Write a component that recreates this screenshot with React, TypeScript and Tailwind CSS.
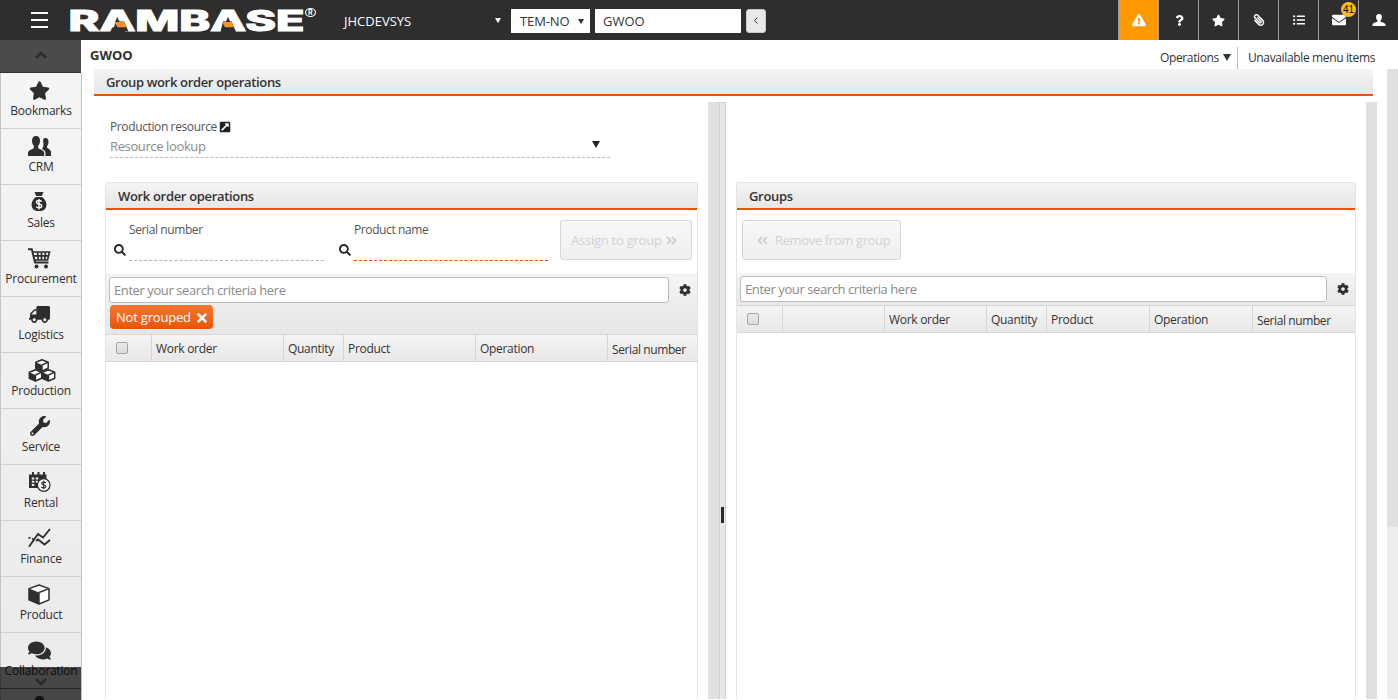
import type { ReactNode } from 'react'
import {
  FaStar, FaTruck, FaWrench, FaComments, FaSearch, FaCog, FaTimes,
  FaPaperclip, FaListUl, FaEnvelope, FaQuestion, FaExclamationTriangle,
  FaAngleDoubleLeft, FaAngleDoubleRight, FaExternalLinkSquareAlt,
} from 'react-icons/fa'

/* ---------- Icons ---------- */

function CrmIcon() {
  return (
    <svg width="24" height="20" viewBox="0 0 24 20" fill="currentColor">
      <path d="M15 4c.5-1.500 1.300-2 2.500-2 2 0 3 1.600 3 4 0 1.700-.6 3.200-1.400 4v1.500c0 .9 3.900 1.800 3.900 4.500v4h-5.500v-2.500c0-2.600-1.600-3.700-3.500-4.500.9-1.100 1.500-3 1.500-5z" />
      <path d="M8 0c2.600 0 4 1.900 4 4.700 0 2.100-.7 4-1.800 5v2c0 1.300 6 2 6 5.300v3H0v-3c0-3.300 5.800-4 5.800-5.300v-2C4.700 8.700 4 6.800 4 4.700 4 1.900 5.400 0 8 0z" />
    </svg>
  )
}

function MoneyBagIcon() {
  return (
    <svg width="16" height="20" viewBox="0 0 16 20" className="mr-px">
      <path d="M3.500 0h9l-1.700 4H5.200z" fill="currentColor" />
      <path d="M5 5h6c2.500 1.700 4.400 4.200 4.400 7.500 0 4.600-2.600 6.500-7.400 6.500S.6 17.100.6 12.500C.6 9.200 2.500 6.700 5 5z" fill="currentColor" />
      <path d="M10.700 9.600C10 8.800 9.100 8.500 8 8.500c-1.500 0-2.500.6-2.500 1.700C5.500 13 10.700 11.100 10.700 14c0 1.200-1.100 1.800-2.700 1.800-1.200 0-2.200-.4-2.900-1.200M8 7v10.500" fill="none" stroke="#fff" strokeWidth="1.400" />
    </svg>
  )
}

function CartIcon() {
  return (
    <svg width="23" height="21" viewBox="0 0 23 21">
      <path d="M0 1.300h3.800L7 14.500h13.500" fill="none" stroke="currentColor" strokeWidth="1.900" />
      <path d="M5 4h16.500l-2 8H7M5.700 7.800h15M9.500 4l.8 8M13.500 4v8M17.500 4l-.8 8" fill="none" stroke="currentColor" strokeWidth="1.700" />
      <circle cx="8.500" cy="18.500" r="2" fill="currentColor" />
      <circle cx="18" cy="18.500" r="2" fill="currentColor" />
    </svg>
  )
}

function CubesIcon() {
  const cube = (x: number, y: number) => (
    <g transform={`translate(${x} ${y})`}>
      <path d="M.8 3.200L7 .7l6.200 2.500v6L7 12 .8 9.200z" fill="#fff" stroke="currentColor" strokeWidth="1.500" strokeLinejoin="round" />
      <path d="M.8 3.200L7 6v6L.8 9.200z" fill="currentColor" />
      <path d="M7 6v6M7 6l6.200-2.800" stroke="currentColor" strokeWidth="1.400" />
    </g>
  )
  return (
    <svg width="28" height="23" viewBox="0 0 28 23" className="ml-1">
      {cube(7, 0)}
      {cube(0.5, 10)}
      {cube(13.500, 10)}
    </svg>
  )
}

function RentalIcon() {
  return (
    <svg width="22" height="20" viewBox="0 0 22 20">
      <path d="M0 2.500h3V0h2v2.500h3.500V0h2v2.500H14V0h2v2.500h1.500V16H0z" fill="currentColor" />
      <path d="M2.800 6.500h2.500M6.800 6.500h2.500M2.800 9.800h2.500M6.800 9.800h2.500M2.800 13h2.500" stroke="#f1f0f0" strokeWidth="1.900" />
      <circle cx="14.700" cy="13" r="6.300" fill="#f4f4f4" stroke="currentColor" strokeWidth="1.200" />
      <path d="M16.800 11c-.5-.7-1.200-.9-2.100-.9-1.200 0-2 .5-2 1.400 0 2.200 4.200.8 4.200 3 0 .9-.9 1.400-2.200 1.400-1 0-1.800-.3-2.300-1M14.700 8.800v8.500" fill="none" stroke="currentColor" strokeWidth="1.100" />
    </svg>
  )
}

function FinanceIcon() {
  return (
    <svg width="23" height="20" viewBox="0 0 23 20" fill="none" stroke="currentColor" strokeWidth="1.800">
      <path d="M1 18.800L10 6l5 3.500L22 1" />
      <path d="M.5 9.800h2M4.200 10.500l2 1.600M8 13l2-1.500 6.500 5L22 12" />
    </svg>
  )
}

function BoxIcon() {
  return (
    <svg width="22" height="21" viewBox="0 0 22 21" className="mr-[2px]">
      <path d="M1 4.600L11 1l10 3.600v11.300L11 20 1 15.900z" fill="#fff" stroke="currentColor" strokeWidth="1.500" strokeLinejoin="round" />
      <path d="M1 4.600L11 8.500V20L1 15.900z" fill="currentColor" />
      <path d="M11 8.500V20M11 8.500l10-3.900" stroke="currentColor" strokeWidth="1.400" />
    </svg>
  )
}

function UserIcon() {
  return (
    <svg width="14" height="12" viewBox="0 0 14 12" fill="currentColor">
      <path d="M7 0c1.900 0 2.900 1.300 2.900 3.100 0 1.500-.5 2.700-1.300 3.400v.9c0 .7 4.900 1.100 4.900 3.400V12H.5v-1.200c0-2.300 4.900-2.700 4.900-3.400v-.9C4.600 5.800 4.100 4.600 4.100 3.100 4.100 1.300 5.100 0 7 0z" />
    </svg>
  )
}

function Chevron({ className = '' }: { className?: string }) {
  return (
    <svg width="12" height="8" viewBox="0 0 12 8" fill="none" stroke="currentColor" strokeWidth="2.600" className={className}>
      <path d="M1 7l5-5 5 5" />
    </svg>
  )
}

function Caret({ className = '' }: { className?: string }) {
  return (
    <svg width="8" height="7" viewBox="0 0 8 7" fill="currentColor" className={className}>
      <path d="M0 0h8L4 7z" />
    </svg>
  )
}

function Logo() {
  return (
    <svg width="250" height="40" viewBox="0 0 250 40" className="shrink-0">
      <text
        x="-1.500" y="30.500" textLength="236" lengthAdjust="spacingAndGlyphs"
        fill="#fff" stroke="#fff" strokeWidth="1"
        className="font-['Inter',sans-serif] text-[28px] font-extrabold"
      >
        RAMBASE
      </text>
      {/* The crossbars of both A's are orange wedges */}
      <path d="M45.500 21.500h8.500l4.500 10H43z" fill="#2e2e2e" />
      <path d="M153 21.500h8.500l4.500 10h-15.500z" fill="#2e2e2e" />
      <path d="M44.500 22h9.500l2.500 5.200H47.500z" fill="#f7941d" />
      <path d="M152 22h9.500l2.500 5.200H155z" fill="#f7941d" />
      <ellipse cx="240.500" cy="12.500" rx="5" ry="4" fill="none" stroke="#fff" strokeWidth="1.200" />
      <text x="238" y="15" fill="#fff" className="font-['Inter',sans-serif] text-[7px] font-bold">R</text>
    </svg>
  )
}

/* ---------- Top bar ---------- */

const actions: { name: string; icon: ReactNode }[] = [
  { name: 'warning', icon: <FaExclamationTriangle size={14} /> },
  { name: 'help', icon: <FaQuestion size={11} className="ml-[2px]" /> },
  { name: 'favourites', icon: <FaStar size={13} /> },
  { name: 'attachments', icon: <FaPaperclip size={12} className="-scale-x-100" /> },
  { name: 'list', icon: <FaListUl size={12} /> },
  { name: 'messages', icon: <FaEnvelope size={14} /> },
  { name: 'user', icon: <UserIcon /> },
]

function TopBar() {
  return (
    <header className="flex h-10 items-center bg-[#2e2e2e] text-[13px] text-white">
      <button className="ml-[31px] flex w-[17px] shrink-0 flex-col gap-[5px]" aria-label="Menu">
        <span className="h-[2px] w-full bg-white" />
        <span className="h-[2px] w-full bg-white" />
        <span className="h-[2px] w-full bg-white" />
      </button>
      <div className="ml-[22px] w-[250px] shrink-0"><Logo /></div>
      <div className="ml-6 flex w-[157px] items-center justify-between pt-[3px]">
        <span>JHCDEVSYS</span>
        <Caret className="mb-[3px] w-[6px]" />
      </div>
      <div className="ml-[10px] mt-[2px] flex h-6 w-[79px] items-center justify-between bg-white pl-[9px] pr-[6px] text-[#333]">
        <span className="pt-px tracking-[-0.1px]">TEM-NO</span>
        <Caret className="w-[6px]" />
      </div>
      <div className="ml-[5px] mt-[2px] flex h-6 w-[146px] items-center bg-white pl-2 pt-px text-[#333]">GWOO</div>
      <button className="ml-[5px] mt-[2px] flex h-6 w-5 items-center justify-center rounded-[3px] border border-[#c8c8c8] bg-[#e9e9e9] pb-px text-[#333]" aria-label="Back">
        <svg width="4" height="7" viewBox="0 0 4 7" fill="none" stroke="currentColor"><path d="M3.500.5l-3 3 3 3" /></svg>
      </button>
      <div className="ml-auto flex">
        {actions.map((a) => (
          <button
            key={a.name}
            aria-label={a.name}
            className={`relative flex h-10 w-10 items-center justify-center border-l border-[#a29c9c] ${a.name === 'warning' ? 'bg-[#f90]' : ''}`}
          >
            {a.icon}
            {a.name === 'messages' && (
              <span className="absolute left-[22px] top-[2px] flex h-[15px] w-[15px] items-center justify-center rounded-full bg-[#f9bd0e] font-['Liberation_Sans',sans-serif] text-[10px] text-black">
                41
              </span>
            )}
          </button>
        ))}
      </div>
    </header>
  )
}

/* ---------- Sidebar ---------- */

const menu: { label: string; icon: ReactNode }[] = [
  { label: 'Bookmarks', icon: <FaStar size={21} /> },
  { label: 'CRM', icon: <CrmIcon /> },
  { label: 'Sales', icon: <MoneyBagIcon /> },
  { label: 'Procurement', icon: <CartIcon /> },
  { label: 'Logistics', icon: <FaTruck size={21} className="-scale-x-100" /> },
  { label: 'Production', icon: <CubesIcon /> },
  { label: 'Service', icon: <FaWrench size={20} /> },
  { label: 'Rental', icon: <RentalIcon /> },
  { label: 'Finance', icon: <FinanceIcon /> },
  { label: 'Product', icon: <BoxIcon /> },
  { label: 'Collaboration', icon: <FaComments size={23} /> },
]

function Sidebar() {
  return (
    <aside className="relative h-[660px] w-[82px] shrink-0 overflow-hidden text-[12px] text-[#2e2e2e]">
      <div className="flex h-[33px] w-[81px] items-center justify-center border-b border-[#333] bg-[#4b4b4b] text-[#2c2c2c]">
        <Chevron className="mb-[2px]" />
      </div>
      <nav className="border-x border-[#c4c4c4] bg-linear-to-b from-[#f5f5f5] to-[#ebe9ea]">
        {menu.map((m) => (
          <div key={m.label} className="flex h-14 flex-col items-center border-b border-[#d0d0d0]">
            <div className="mr-[3px] flex h-[33px] items-center justify-center pt-px">{m.icon}</div>
            <span className="-mt-[3px] whitespace-nowrap leading-4 tracking-[-0.2px]">{m.label}</span>
          </div>
        ))}
        <div className="h-14" />
      </nav>
      {/* Scroll-down strip over the end of the menu */}
      <div className="absolute bottom-0 left-0 h-[33px] w-[81px] bg-black/70">
        <Chevron className="absolute left-[35px] top-[11px] rotate-180 text-[#2a2a2a]" />
        <div className="mt-[21px] h-px bg-black/40" />
        <div className="absolute bottom-0 left-[35px] h-[4px] w-[9px] rounded-t-full bg-[#111]" />
      </div>
    </aside>
  )
}

/* ---------- Panels ---------- */

function PanelHeader({ children }: { children: ReactNode }) {
  return (
    <div className="h-[27px] border-b-2 border-[#ea5400] bg-linear-to-b from-[#f4f4f4] to-[#e8e6e7] pl-3 text-[13px] font-[540] leading-[26px] tracking-[-0.33px] text-[#333]">
      {children}
    </div>
  )
}

function SearchRow({ width }: { width: string }) {
  return (
    <div className="flex items-center">
      <div className={`flex h-[26px] items-center rounded-[3px] border border-[#bcbcbc] bg-white pl-1 pt-[2px] text-[13px] tracking-[-0.41px] text-[#8a8a8a] ${width}`}>
        Enter your search criteria here
      </div>
      <FaCog size={12} className="mb-px ml-[10px] text-[#2e2e2e]" />
    </div>
  )
}

function TableHead({ columns }: { columns: { label: string; width: string }[] }) {
  return (
    <div className="flex h-7 border-y border-[#d6d6d6] bg-linear-to-b from-[#f5f5f5] to-[#e9e7e8] text-[12px] tracking-[-0.3px] text-[#333]">
      {columns.map((c, i) => (
        <div
          key={i}
          className={`flex shrink-0 items-center ${i > 0 ? 'border-l border-[#d6d6d6] pl-1 pt-[2px]' : ''} ${c.label === 'Serial number' ? 'pt-[4px] tracking-[-0.4px]' : ''} ${c.width}`}
        >
          {i === 0 ? (
            <span className="mb-px ml-[10px] h-3 w-3 rounded-[2px] border border-[#a5a5a5] bg-linear-to-b from-[#e9e9e9] to-[#dcdcdc]" />
          ) : c.label}
        </div>
      ))}
    </div>
  )
}

function SearchField({ label, width, active = false }: { label: string; width: string; active?: boolean }) {
  return (
    <div className="flex">
      <FaSearch size={12} className="mr-[3px] mt-[34px] shrink-0 text-[#2a2a2a]" />
      <div className={`h-[51px] border-b border-dashed pt-3 text-[12px] leading-4 tracking-[-0.4px] text-[#555] ${width} ${active ? 'border-[#ea5400]' : 'border-[#b5b5b5]'}`}>
        {label}
      </div>
    </div>
  )
}

const button = 'flex h-10 items-center rounded-[3px] border border-[#d6d6d6] bg-linear-to-b from-[#f8f8f8] to-[#efefef] pt-px text-[13px] font-medium text-[#d2d2d2]'

const operationColumns = [
  { label: '', width: 'w-[45px]' },
  { label: 'Work order', width: 'w-[132px]' },
  { label: 'Quantity', width: 'w-[60px]' },
  { label: 'Product', width: 'w-[132px]' },
  { label: 'Operation', width: 'w-[132px]' },
  { label: 'Serial number', width: 'w-[90px]' },
]

const groupColumns = [
  { label: '', width: 'w-[45px]' },
  { label: '', width: 'w-[102px]' },
  { label: 'Work order', width: 'w-[102px]' },
  { label: 'Quantity', width: 'w-[60px]' },
  { label: 'Product', width: 'w-[103px]' },
  { label: 'Operation', width: 'w-[103px]' },
  { label: 'Serial number', width: 'w-[103px]' },
]

function OperationsPane() {
  return (
    <section className="flex h-full w-[614px] shrink-0 flex-col pl-[11px]">
      <div className="ml-[5px] mt-[17px] h-[39px] w-[500px] border-b border-dashed border-[#bcbcbc]">
        <div className="flex items-center text-[12px] leading-4 tracking-[-0.38px] text-[#555]">
          Production resource
          <FaExternalLinkSquareAlt size={12} className="ml-[2px] text-[#222]" />
        </div>
        <div className="mt-[2px] flex items-center justify-between pr-[10px] text-[13px] leading-[18px] tracking-[-0.38px] text-[#8a8a8a]">
          Resource lookup
          <Caret className="mb-[3px] text-[#222]" />
        </div>
      </div>
      <div className="mt-[24px] w-[593px] grow rounded-t-[3px] border border-b-0 border-[#e4e4e4]">
        <PanelHeader>Work order operations</PanelHeader>
        <div className="flex h-16 pl-2">
          <SearchField label="Serial number" width="w-[195px]" />
          <div className="ml-[15px]">
            <SearchField label="Product name" width="w-[194px]" active />
          </div>
          <button className={`ml-3 mt-[10px] w-[132px] gap-[3px] whitespace-nowrap pl-[10px] tracking-[-0.24px] ${button}`}>
            Assign to group <FaAngleDoubleRight size={13} />
          </button>
        </div>
        <div className="h-[60px] border-t border-[#eee] bg-linear-to-b from-[#f4f4f4] to-[#e8e6e7] pl-[3px] pt-[2px]">
          <SearchRow width="w-[560px]" />
          <div className="ml-px mt-[2px] flex h-6 w-[103px] items-center gap-1 rounded bg-linear-to-b from-[#f37732] to-[#ea5400] pl-[6px] pt-px text-[13px] font-medium tracking-[-0.2px] text-white">
            Not grouped <FaTimes size={14} />
          </div>
        </div>
        <TableHead columns={operationColumns} />
      </div>
    </section>
  )
}

function GroupsPane() {
  return (
    <section className="flex h-full w-[640px] shrink-0 pl-[10px]">
      <div className="mt-20 w-[620px] rounded-t-[3px] border border-b-0 border-[#e4e4e4]">
        <PanelHeader>Groups</PanelHeader>
        <div className="h-[63px] pl-[5px] pt-[10px]">
          <button className={`w-[159px] gap-[6px] whitespace-nowrap pl-[13px] tracking-[-0.36px] ${button}`}>
            <FaAngleDoubleLeft size={13} /> Remove from group
          </button>
        </div>
        <div className="h-8 bg-linear-to-b from-[#f4f4f4] to-[#e9e7e8] pl-[3px] pt-[3px]">
          <SearchRow width="w-[587px]" />
        </div>
        <TableHead columns={groupColumns} />
      </div>
    </section>
  )
}

export default function App() {
  return (
    <div className="h-[700px] w-[1398px] overflow-hidden bg-white font-['Open_Sans','Noto_Sans',sans-serif]">
      <TopBar />
      <div className="flex">
        <Sidebar />
        <main className="flex h-[659px] grow flex-col">
          <div className="flex h-[29px] items-center pl-2 pr-[23px] text-[12px] text-[#333]">
            <h1 className="pt-[3px] text-[13px] font-bold text-[#2e2e2e]">GWOO</h1>
            <div className="ml-auto flex h-full items-center pr-[6px] pt-[7px] tracking-[-0.36px]">
              Operations <Caret className="mb-px ml-1" />
            </div>
            <div className="mt-[7px] flex h-[22px] items-center border-l border-[#c0c0c0] pl-[10px] tracking-[-0.36px]">
              Unavailable menu items
            </div>
          </div>
          <div className="flex grow">
            <div className="ml-3 flex w-[1283px] shrink-0 flex-col">
              <div className="mr-1"><PanelHeader>Group work order operations</PanelHeader></div>
              <div className="mt-[6px] flex grow">
                <OperationsPane />
                <div className="w-[11px] shrink-0 bg-[#e0e0e0]" />
                <div className="flex w-[7px] shrink-0 items-center border border-b-0 border-[#d0d0d0] bg-[#e8e8e8]">
                  <span className="mt-[228px] h-4 w-[3px] shrink-0 translate-x-px bg-[#2a2a2a]" />
                </div>
                <GroupsPane />
                <div className="w-[11px] shrink-0 bg-[#e0e0e0]" />
              </div>
            </div>
            <div className="ml-auto w-[11px] bg-[#eee]">
              <div className="h-[458px] bg-[#e0e0e0]" />
            </div>
          </div>
        </main>
      </div>
    </div>
  )
}
